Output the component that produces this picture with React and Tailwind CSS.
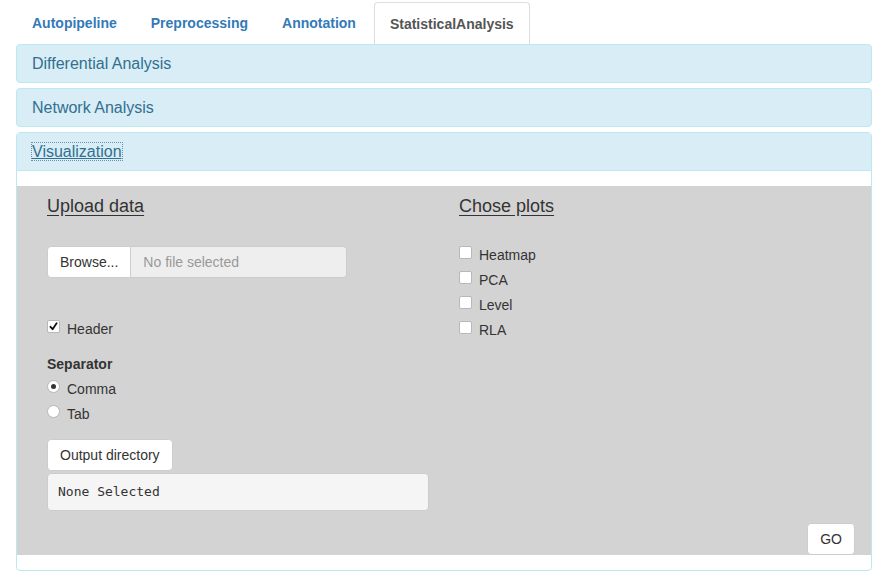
import React from "react";

const font = { fontFamily: '"Liberation Sans", Arial, sans-serif' };

function Box({ checked }) {
  return (
    <span className="mt-[1px] flex h-[13px] w-[13px] shrink-0 items-center justify-center rounded-[2px] border border-[#b8b8b8] bg-white">
      {checked && (
        <svg width="9" height="9" viewBox="0 0 9 9">
          <path d="M1.5 4.8 L3.6 7.2 L7.6 1.2" fill="none" stroke="#111" strokeWidth="1.8" strokeLinecap="round" strokeLinejoin="round" />
        </svg>
      )}
    </span>
  );
}

function Radio({ checked }) {
  return (
    <span className="mt-[1px] flex h-[13px] w-[13px] shrink-0 items-center justify-center rounded-full border border-[#b8b8b8] bg-white">
      {checked && <span className="h-[5px] w-[5px] rounded-full bg-[#333]" />}
    </span>
  );
}

function Check({ label, checked }) {
  return (
    <div className="flex h-5 items-start gap-[7px] text-sm leading-5 text-[#333]">
      <Box checked={checked} />
      <span>{label}</span>
    </div>
  );
}

function RadioRow({ label, checked }) {
  return (
    <div className="flex h-5 items-start gap-[7px] text-sm leading-5 text-[#333]">
      <Radio checked={checked} />
      <span>{label}</span>
    </div>
  );
}

function PanelHead({ children, visual }) {
  return (
    <div className="flex h-[37px] items-center px-[15px] text-base text-[#31708f]">
      {visual ? (
        <span className="underline decoration-[#31708f] outline-1 outline-dotted outline-[#6a8fa8] leading-[17px]">{children}</span>
      ) : (
        <span>{children}</span>
      )}
    </div>
  );
}

export default function App() {
  return (
    <div className="min-h-[587px] bg-white pl-[16px] pr-[11px]" style={font}>
      {/* tabs */}
      <div className="flex h-[44px] items-end text-sm font-bold">
        <div className="flex h-[42px] items-center border border-transparent px-[15px] text-[#337ab7]">Autopipeline</div>
        <div className="ml-[2px] flex h-[42px] items-center border border-transparent px-[15px] text-[#337ab7]">Preprocessing</div>
        <div className="ml-[2px] flex h-[42px] items-center border border-transparent px-[15px] text-[#337ab7]">Annotation</div>
        <div className="ml-[2px] flex h-[42px] items-center rounded-t-[4px] border border-b-0 border-[#ddd] bg-white px-[15px] text-[#555]">
          StatisticalAnalysis
        </div>
      </div>

      {/* panels */}
      <div className="rounded-[4px] border border-[#bce8f1] bg-[#d9edf7]">
        <PanelHead>Differential Analysis</PanelHead>
      </div>
      <div className="mt-[5px] rounded-[4px] border border-[#bce8f1] bg-[#d9edf7]">
        <PanelHead>Network Analysis</PanelHead>
      </div>
      <div className="mt-[5px] overflow-hidden rounded-[4px] border border-[#bce8f1] bg-white">
        <div className="border-b border-[#bce8f1] bg-[#d9edf7]">
          <PanelHead visual>Visualization</PanelHead>
        </div>
        <div className="py-[15px]">
          <div className="flex flex-col bg-[#d3d3d3] pl-[30px] pr-[16px] pt-[10px]">
            <div className="flex">
              {/* left column */}
              <div className="flex w-[382px] flex-col">
                <div className="text-[18px] leading-5 text-[#333] underline underline-offset-[3px]">Upload data</div>
                <div className="mt-[30px] flex h-[32px] w-[300px] text-sm">
                  <div className="flex items-center rounded-l-[4px] border border-[#ccc] bg-white px-[12px] text-[#333]">Browse...</div>
                  <div className="flex flex-1 items-center rounded-r-[4px] border border-l-0 border-[#ccc] bg-[#eeeeee] px-[12px] text-[#999]">
                    No file selected
                  </div>
                </div>
                <div className="mt-[41px]">
                  <Check label="Header" checked />
                </div>
                <div className="mt-[15px] h-5 text-sm font-bold leading-5 text-[#333]">Separator</div>
                <div className="mt-[5px]">
                  <RadioRow label="Comma" checked />
                </div>
                <div className="mt-[5px]">
                  <RadioRow label="Tab" />
                </div>
                <div className="mt-[15px] flex">
                  <div className="flex h-[32px] items-center rounded-[4px] border border-[#ccc] bg-white px-[12px] text-sm text-[#333]">
                    Output directory
                  </div>
                </div>
                <div
                  className="mt-[2px] flex h-[38px] items-center rounded-[4px] border border-[#ccc] bg-[#f5f5f5] px-[10px] text-[13px] text-[#333]"
                  style={{ fontFamily: '"DejaVu Sans Mono", "Liberation Mono", monospace' }}
                >
                  None Selected
                </div>
              </div>
              {/* right column */}
              <div className="ml-[30px] flex flex-col">
                <div className="text-[18px] leading-5 text-[#333] underline underline-offset-[3px]">Chose plots</div>
                <div className="mt-[29px] flex flex-col gap-[5px]">
                  <Check label="Heatmap" />
                  <Check label="PCA" />
                  <Check label="Level" />
                  <Check label="RLA" />
                </div>
              </div>
            </div>
            <div className="mt-[12px] flex justify-end">
              <div className="flex h-[32px] items-center rounded-[4px] border border-[#ccc] bg-white px-[12px] text-sm text-[#333]">GO</div>
            </div>
          </div>
        </div>
      </div>
    </div>
  );
}
